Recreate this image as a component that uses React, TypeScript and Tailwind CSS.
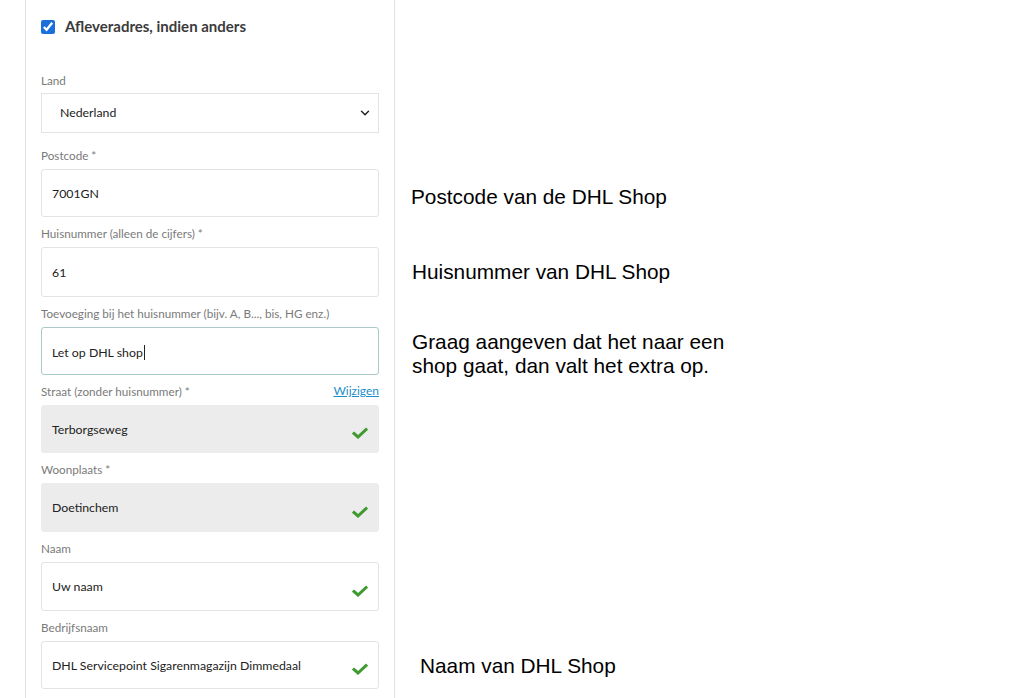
import { ChevronDown } from "lucide-react";

type Field = {
  label: string;
  value: string;
  height: string;
  required?: boolean;
  locked?: boolean;
  valid?: boolean;
  focused?: boolean;
  edit?: boolean;
};

const fields: Field[] = [
  { label: "Postcode", value: "7001GN", height: "h-[48px]", required: true },
  { label: "Huisnummer (alleen de cijfers)", value: "61", height: "h-[50px]", required: true },
  {
    label: "Toevoeging bij het huisnummer (bijv. A, B..., bis, HG enz.)",
    value: "Let op DHL shop",
    height: "h-[48px]",
    focused: true,
  },
  {
    label: "Straat (zonder huisnummer)",
    value: "Terborgseweg",
    height: "h-[48px]",
    required: true,
    locked: true,
    valid: true,
    edit: true,
  },
  { label: "Woonplaats", value: "Doetinchem", height: "h-[49px]", required: true, locked: true, valid: true },
  { label: "Naam", value: "Uw naam", height: "h-[49px]", valid: true },
  { label: "Bedrijfsnaam", value: "DHL Servicepoint Sigarenmagazijn Dimmedaal", height: "h-[48px]", valid: true },
];

function CheckMark() {
  return (
    <svg viewBox="0 0 16 12" className="h-[12px] w-[16px]" fill="none">
      <path d="M2 6.5 L6 10 L14 2.5" stroke="#3f9a30" strokeWidth="3" strokeLinecap="square" />
    </svg>
  );
}

function FormField({ field }: { field: Field }) {
  return (
    <div className="mb-[8px]">
      <div className="flex h-[16px] items-center justify-between text-[11.7px] leading-[16px] text-[#7a7a7a]">
        <span>
          {field.label}
          {field.required && " *"}
        </span>
        {field.edit && <span className="text-[12px] text-[#1b8fc9] underline">Wijzigen</span>}
      </div>
      <div
        className={`mt-[6px] flex ${field.height} items-center justify-between rounded-[3px] border pl-[10px] pr-[10px] text-[12.3px] text-[#222] ${
          field.locked ? "border-[#ececec] bg-[#ececec]" : "bg-white"
        } ${field.focused ? "border-[#a9c9cb]" : field.locked ? "" : "border-[#e3e3e3]"}`}
      >
        <span className="pt-[2px]">
          {field.value}
          {field.focused && <span className="ml-[1px] inline-block h-[15px] w-px translate-y-[3px] bg-[#222]" />}
        </span>
        {field.valid && (
          <span className="mt-[8px]">
            <CheckMark />
          </span>
        )}
      </div>
    </div>
  );
}

export default function App() {
  return (
    <div className="flex h-[698px] w-[1025px] overflow-hidden bg-white font-['Lato','Open_Sans',sans-serif]">
      <div className="w-[25px] shrink-0" />

      <div className="w-[370px] shrink-0 border-x border-[#e2e2e2] px-[15px]">
        <label className="flex h-[52px] items-center gap-[10px] pt-[1px]">
          <input type="checkbox" defaultChecked className="m-0 h-[14px] w-[14px] accent-[#1a6fdb]" />
          <span className="text-[15px] font-bold text-[#3b3b3b]">Afleveradres, indien anders</span>
        </label>

        <div className="mt-[20px] h-[16px] text-[11.7px] leading-[16px] text-[#7a7a7a]">Land</div>
        <div className="mt-[5px] flex h-[40px] items-center justify-between border border-[#e3e3e3] pl-[18px] pr-[6px] text-[12.3px] text-[#222]">
          <span>Nederland</span>
          <ChevronDown className="h-[14px] w-[14px] text-[#222]" strokeWidth={2.5} />
        </div>

        <div className="mt-[14px]">
          {fields.map((f) => (
            <FormField key={f.label} field={f} />
          ))}
        </div>
      </div>

      <div className="flex flex-col pl-[16px] font-['Liberation_Sans',Arial,sans-serif] text-[20.8px] leading-[24px] text-black">
        <p className="mt-[185px]">Postcode van de DHL Shop</p>
        <p className="mt-[51px] pl-[1px]">Huisnummer van DHL Shop</p>
        <p className="mt-[46px] pl-[1px]">
          Graag aangeven dat het naar een
          <br />
          shop gaat, dan valt het extra op.
        </p>
        <p className="mt-[276px] pl-[9px]">Naam van DHL Shop</p>
      </div>
    </div>
  );
}
